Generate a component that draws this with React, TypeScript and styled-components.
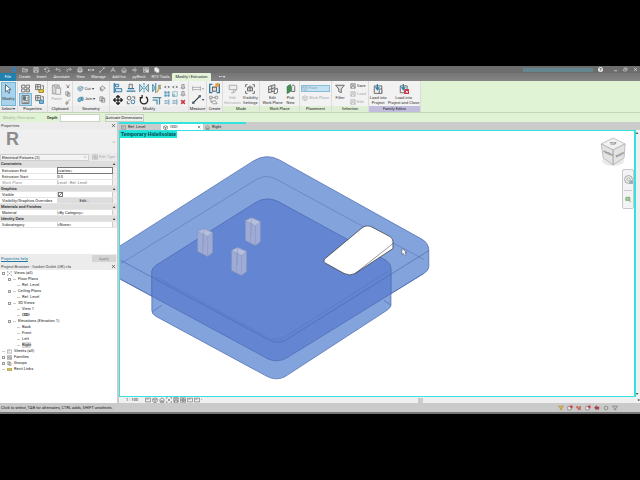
import React from "react";
import styled, { createGlobalStyle, css } from "styled-components";

const Global = createGlobalStyle`
  * { box-sizing: border-box; }
  body { margin: 0; background: #000; }
  button, input, select, table { font: inherit; color: inherit; }
  button { padding: 0; border: 0; background: none; white-space: nowrap; }
  svg { display: block; flex: none; }
`;

const cyan = "#34e2e0";

const Screen = styled.div`
  min-height: 100vh;
  padding: 66px 0;
  display: flex;
  flex-direction: column;
  background: #000;
  color: #222;
  font: 4px/6px Roboto, "Noto Sans", sans-serif;
  overflow: hidden;
`;

/* ---------- icons ---------- */
const icons: Record<string, React.ReactNode> = {
  revit: <path d="M4 14V2h5c5 0 5 6 0 6H5M9 8l4 6" stroke="#2d86c8" strokeWidth="3" />,
  open: <path d="M1 13V4h5l2 2h6v7zM3 8h12" />,
  save: <path d="M2 2h12v12H2zM5 2v4h6V2M4 14V9h8v5" />,
  sync: <path d="M13 5a6 6 0 0 0-11 2M2 3v4h4M3 11a6 6 0 0 0 11-2m0 4V9h-4" />,
  undo: <path d="M3 6h7c5 0 5 6 1 7M6 2L2 6l4 4" />,
  redo: <path d="M13 6H6c-5 0-5 6-1 7M10 2l4 4-4 4" />,
  print: <path d="M4 6V2h8v4M2 6h12v6H2zM4 10h8v4H4z" />,
  rule: <path d="M1 10V5m14 5V5M1 8h14M4 5L1 8l3 3m8-6l3 3-3 3" />,
  line: <path d="M2 14L14 2M2 11v3h3M11 2h3v3" />,
  text: <path d="M2 14L8 2l6 12M5 9h6" />,
  house: <path d="M1 8l7-6 7 6M3 7v7h10V7M6 14v-4h4v4" />,
  section: <path d="M8 1v14M2 8h12M4 5l-3 3 3 3" />,
  cursor: <path d="M4 1v12l3-3 2 5 2-1-2-5h4z" fill="#fff" stroke="#4f7080" />,
  type: <><path d="M1 2h6v5H1zM9 2h6v5H9zM1 9h6v5H1z" /><path d="M9 9h6v5H9z" fill="#d9d9d9" /></>,
  types: <><path d="M1 1h9v9H1zM1 5h9M5 1v9M12 3h3v6" /><path d="M7 10h8v5H7z" fill="#f0cf3f" stroke="#8f7a20" /></>,
  palette: <><path d="M2 1h12v14H2z" fill="#fff" /><path d="M4 3h4v5H4z" fill="#367da8" /><path d="M10 4h3M10 7h3M4 10h9M4 13h9" /></>,
  families: <><path d="M1 1h9v9H1zM1 5h9M5 1v9M12 3h3v5" /><path d="M8 9h7v6H8z" fill="#77b7d5" stroke="#367da8" /></>,
  paste: <><path d="M2 2h10v12H2z" fill="#d5d5d5" /><path d="M5 1h4v3H5zM7 6h7v9H7z" fill="#eee" /></>,
  cut: <path d="M3 2l8 9M12 2L5 11" strokeWidth="2" />,
  copy: <path d="M2 2h7v9H2zM6 5h7v9H6z" fill="#f4f4f4" />,
  brush: <path d="M13 1L7 8M4 7l5 4-5 4-2-4z" fill="#cdbf8c" />,
  cope: <path d="M2 6l5-3 7 2-1 6-6 3-5-3zM7 8l7-3M7 8v6M2 6l5 2" fill="#c8dfe9" stroke="#6e94a5" />,
  join: <path d="M2 8c0-4 6-6 8-5v7c-3 4-8 4-8 0zM10 3h4v7h-4" fill="#75b5cf" stroke="#397c98" />,
  paint: <path d="M3 6l5-4 6 5-6 6zM3 6v6l5 2" fill="#e5e5e5" />,
  align: <><path d="M2 0v16" stroke="#347aa5" strokeWidth="2" /><path d="M4 2h5v4H4zM4 9h10v5H4z" fill="#d9ebf2" stroke="#347aa5" /></>,
  offset: <><path d="M1 13h14M3 9h10" stroke="#347aa5" strokeWidth="2" /><path d="M5 8V2h5v6" /></>,
  mirror: <><path d="M8 0v16" stroke="#347aa5" strokeDasharray="3 1" /><path d="M1 2v12l5-6zM15 2v12l-5-6z" fill="#bddde9" stroke="#538ea8" /></>,
  mirrorDraw: <><path d="M6 0v16" stroke="#347aa5" /><path d="M1 2v12l4-6zM11 9V3l3 6z" fill="#bddde9" stroke="#538ea8" /><path d="M8 15l6-12" stroke="#d3a531" strokeWidth="2" /></>,
  move: <path d="M8 1v14M1 8h14M5 4l3-3 3 3M5 12l3 3 3-3M4 5L1 8l3 3M12 5l3 3-3 3" stroke="#222" strokeWidth="2" />,
  circles: <><circle cx="5" cy="5" r="3" /><circle cx="11" cy="11" r="3" stroke="#347aa5" /><path d="M10 3h4v4M2 10v4h4" /></>,
  rotate: <path d="M11 3a6 6 0 1 1-6 0M5 0v4H1" stroke="#222" strokeWidth="2" />,
  trim: <path d="M1 4h14M1 8h7v7M12 4v11" stroke="#558ca3" strokeWidth="2" />,
  split: <path d="M1 8h5m4 0h5M5 5l-3 3 3 3M11 5l3 3-3 3" strokeWidth="2" />,
  array: <path d="M2 2h4v4H2zM10 2h4v4h-4zM2 10h4v4H2zM10 10h4v4h-4z" fill="#76b5d2" stroke="#347aa5" />,
  scale: <path d="M2 2h12v12H2zM2 9h5v5H2z" stroke="#5695ad" />,
  pin: <path d="M5 1h6v7l3 3H2l3-3zM8 11v4" fill="#ddd" />,
  extend: <path d="M1 5h9M1 11h9M13 1v14" stroke="#347aa5" strokeWidth="2" />,
  remove: <path d="M3 3l10 10M13 3L3 13" stroke="#ce3248" strokeWidth="4" />,
  dim: <path d="M1 4v8m14-8v8M1 6h14M1 10h14" stroke="#aaa" />,
  measure: <><path d="M2 14L14 2" strokeWidth="2" stroke="#333" /><circle cx="2" cy="14" r="2" fill="#347aa5" /><circle cx="14" cy="2" r="2" fill="#347aa5" /></>,
  create: <><path d="M5 2H1v12h4M11 2h4v12h-4" stroke="#347aa5" strokeWidth="2" /><path d="M5 6h6v6H5z" fill="#ddd" /><path d="M10 1h4v4h-4z" fill="#eda146" stroke="#eda146" /></>,
  similar: <path d="M1 2h4v4H1zM10 2h4v4h-4zM5 4h5M3 6v5M3 11l4 3h6l-3-5z" stroke="#999" />,
  extrude: <path d="M2 2h12v7l-5 5V9H2zM9 9h5M9 14H5" stroke="#aaa" fill="#eee" />,
  visibility: <><path d="M4 1H1v4M12 1h3v4M1 11v4h3M15 11v4h-3" /><path d="M4 6l4-3 4 3v5H4zM4 6h8M8 6v5" fill="#ddd" /></>,
  plane: <><path d="M1 4l10-3v10L1 14zM1 9l10-3M6 3v10" fill="#e6e6e6" /><path d="M10 9l5-2v7l-5 2z" fill="#fff" /></>,
  pick: <><path d="M2 4l5-3v11l-5 3z" fill="#3c9b4f" stroke="#307b40" /><path d="M9 5c0-5 6-4 5 1v6H9z" fill="#eee" /></>,
  filter: <path d="M1 2h14l-5 6v6l-4-2V8z" fill="#ddd" />,
  load: <><path d="M2 3h12v12H2z" fill="#eee" /><path d="M10 8h4v7h-4z" fill="#fff" /><path d="M7 0v8M4 5l3 4 3-4" stroke="#2c83b5" strokeWidth="2" /></>,
  loadClose: <><path d="M2 3h11v11H2z" fill="#eee" /><path d="M7 0v8M4 5l3 4 3-4" stroke="#2c83b5" strokeWidth="2" /><path d="M9 9h7v7H9z" fill="#cb3545" stroke="#cb3545" /><path d="M11 11l3 3m0-3l-3 3" stroke="#fff" /></>,
  cube: <path d="M2 5l6-3 6 3v7l-6 3-6-3zM2 5l6 3 6-3M8 8v7" />,
  sheet: <path d="M1 3h14v10H1zM4 6h5" />,
  views: <path d="M4 1H1v4M12 1h3v4M1 11v4h3M15 11v4h-3M5 5l6 6m0-6l-6 6" />,
  link: <path d="M0 5h16v6H0z" fill="#d5c63e" stroke="#827b27" />,
  close: <path d="M3 3l10 10M13 3L3 13" strokeWidth="2" />,
  min: <path d="M3 12h10" strokeWidth="2" />,
  restore: <path d="M2 6h8v7H2zM5 6V3h8v7h-3" />,
  funnel: <path d="M1 3h14l-5 5v5l-4-1V8z" />,
  flagGold: <path d="M1 3h14l-5 5v5l-4-1V8z" fill="#d9b94d" stroke="#a5883a" />,
  flagRed: <><path d="M2 4h9v9H2z" fill="#eee" /><path d="M9 2h5v6H9z" fill="#cf4452" stroke="#cf4452" /></>,
  dragRed: <path d="M2 3l5 3 5-3v6l-5 5V9L2 8zM9 9l5 5" fill="#dd8a70" stroke="#b94436" />,
  arrowRed: <path d="M1 7l6-5v3h6v5H7v3zM11 10v4" fill="#b94450" stroke="#8a3b44" />,
  gear: <circle cx="8" cy="8" r="5" />,
  wheel: <><circle cx="8" cy="8" r="7" stroke="#999" /><circle cx="8" cy="8" r="3" stroke="#999" /><circle cx="13" cy="13" r="3" fill="#8dafb9" stroke="#8dafb9" /></>,
  zoom: <path d="M2 3h9v7H2zM9 10l5 4" fill="#a5c99e" stroke="#80a879" strokeWidth="2" />,
  down: <path d="M4 6l4 4 4-4" strokeWidth="2" />,
};

const Icon = ({ name, size = 7, color = "#666" }: { name: string; size?: number; color?: string }) => (
  <svg width={size} height={size} viewBox="0 0 16 16" fill="none" stroke={color} strokeWidth="1.5" aria-hidden="true">
    {icons[name]}
  </svg>
);

/* ---------- title and tabs ---------- */
const TitleBar = styled.header`
  height: 7px;
  padding: 0 2px 0 11px;
  display: flex;
  align-items: center;
  gap: 5px;
  background: #6d6d6d;
  color: #ddd;
`;
const TitleSpace = styled.span`flex: 1;`;
const Account = styled.span`
  width: 70px;
  height: 4px;
  background: #66868f;
`;
const Help = styled.button`
  width: 5px;
  height: 5px;
  border-radius: 50%;
  background: #e8e8e8;
  color: #444;
  line-height: 5px;
  font-weight: 700;
`;
const TabBar = styled.nav`
  height: 8px;
  display: flex;
  align-items: stretch;
  background: linear-gradient(#747474, #858585);
`;
const RibbonTab = styled.button<{ $w: number; $kind?: "file" | "active" }>`
  width: ${(p) => p.$w}px;
  line-height: 8px;
  color: #f2f2f2;
  ${(p) => p.$kind === "file" && css`background: #2181ae; color: #fff;`}
  ${(p) => p.$kind === "active" && css`background: #e3f2d8; color: #222; border-radius: 1px 1px 0 0;`}
`;

/* ---------- ribbon ---------- */
const Ribbon = styled.section`
  height: 31px;
  display: flex;
  background: #e1f3d5;
`;
const Panel = styled.div<{ $w: number }>`
  width: ${(p) => p.$w}px;
  display: flex;
  flex-direction: column;
  flex: none;
  background: #f2f2f2;
  border-right: 1px solid #dcdcdc;
`;
const PanelBody = styled.div<{ $gap?: number }>`
  flex: 1;
  min-height: 0;
  display: flex;
  align-items: stretch;
  justify-content: center;
  gap: ${(p) => p.$gap ?? 1}px;
  padding: 1px 0 0;
`;
const PanelLabel = styled.div<{ $tone?: "context" | "family" }>`
  height: 6px;
  text-align: center;
  white-space: nowrap;
  background: ${(p) => (p.$tone === "family" ? "#c1bedd" : p.$tone === "context" ? "#dfefd4" : "#ececec")};
`;
const BigButton = styled.button<{ $active?: boolean; $dim?: boolean }>`
  min-width: 14px;
  padding: 2px 1px 0;
  display: flex;
  flex-direction: column;
  align-items: center;
  gap: 1px;
  line-height: 5px;
  white-space: pre;
  color: ${(p) => (p.$dim ? "#aaa" : "#333")};
  ${(p) => p.$active && css`background: #a9d3ec; box-shadow: inset 0 0 0 1px #79b5d6; gap: 2px;`}
`;
const IconGrid = styled.div<{ $cols: number; $cell: number }>`
  display: grid;
  grid-template-columns: repeat(${(p) => p.$cols}, ${(p) => p.$cell}px);
  place-items: center;
  align-content: space-evenly;
`;
const IconButton = styled.button<{ $active?: boolean }>`
  padding: 1px;
  ${(p) => p.$active && css`background: #b3d8ee; box-shadow: 0 0 0 1px #79b5d6;`}
`;
const Stack = styled.div`
  display: flex;
  flex-direction: column;
  justify-content: space-evenly;
`;
const SmallButton = styled.button<{ $dim?: boolean; $active?: boolean }>`
  display: flex;
  align-items: center;
  gap: 1px;
  padding: 0 1px;
  min-height: 7px;
  color: ${(p) => (p.$dim ? "#aaa" : "#333")};
  ${(p) => p.$active && css`background: #c4e2f2; box-shadow: inset 0 0 0 1px #8abdd8; color: #8da6b4;`}
`;

/* ---------- options bar ---------- */
const OptionsBar = styled.form`
  height: 10px;
  display: flex;
  align-items: center;
  background: #e1f3d5;
  border-top: 1px solid #c5d4ba;
`;
const ModeName = styled.span`
  width: 44px;
  padding-left: 3px;
  color: #a5ad9e;
`;
const DepthLabel = styled.label`
  display: flex;
  align-items: center;
  gap: 2px;
  margin-left: 3px;
  font-weight: 500;
`;
const DepthInput = styled.input`
  width: 40px;
  height: 8px;
  padding: 0 1px;
  border: 1px solid #ccd3c7;
  background: #fff;
`;
const Activate = styled.button`
  width: 39px;
  height: 8px;
  margin-left: 5px;
  border: 1px solid #c6cec0;
  background: #eef1eb;
`;

/* ---------- side panels ---------- */
const Main = styled.main`
  flex: 1;
  min-height: 281px;
  display: flex;
  background: #cbcbcb;
`;
const Side = styled.aside`
  width: 118px;
  flex: none;
  display: flex;
  flex-direction: column;
  background: #fff;
  border-right: 1px solid #c9c9c9;
`;
const SideHead = styled.div`
  height: 7px;
  padding: 0 1px;
  display: flex;
  justify-content: space-between;
  align-items: center;
  background: #ececec;
  color: #444;
`;
const Preview = styled.div`
  height: 24px;
  padding: 2px 1px 0 6px;
  display: flex;
  align-items: flex-start;
  justify-content: space-between;
  background: #efefef;
`;
const FamilyMark = styled.span`
  color: #8c8c8c;
  font: 700 18px/17px "Liberation Sans", sans-serif;
`;
const Caret = styled.span`padding-top: 9px;`;
const TypeRow = styled.div`
  height: 8px;
  display: flex;
  align-items: center;
  gap: 2px;
  background: #eaeaea;
`;
const SelectBox = styled.div`
  width: 89px;
  height: 7px;
  padding-right: 1px;
  display: flex;
  align-items: center;
  border: 1px solid #cfcfcf;
  background: #f3f3f3;
`;
const TypeSelect = styled.select`
  appearance: none;
  flex: 1;
  height: 5px;
  padding: 0 1px;
  border: 0;
  line-height: 5px;
  background: none;
`;
const PropTable = styled.table`
  width: 100%;
  border-collapse: collapse;
  table-layout: fixed;
  tr { height: 6px; }
  td, th { padding: 0; line-height: 5px; border-bottom: 1px solid #e5e5e5; text-align: left; font-weight: 400; white-space: nowrap; }
`;
const GroupCell = styled.th`
  && { background: #dedede; font-weight: 500; padding: 0 1px; }
`;
const GroupRow = styled.span`
  display: flex;
  justify-content: space-between;
  padding-right: 1px;
`;
const NameCell = styled.th<{ $dim?: boolean }>`
  && { padding-left: 2px; border-right: 1px solid #ddd; color: ${(p) => (p.$dim ? "#999" : "#222")}; }
`;
const ValueCell = styled.td<{ $dim?: boolean }>`color: ${(p) => (p.$dim ? "#777" : "#222")};`;
const ValueInput = styled.input`
  display: block;
  width: 100%;
  height: 5px;
  padding: 0;
  border: 0;
  outline: 1px solid #777;
  line-height: 5px;
`;
const CheckBox = styled.input`
  appearance: none;
  display: block;
  width: 5px;
  height: 5px;
  margin: 0;
  border: 1px solid #777;
  background: linear-gradient(135deg, #fff 40%, #777 50%, #fff 60%);
`;
const EditButton = styled.button`
  display: block;
  width: 100%;
  height: 5px;
  line-height: 5px;
  background: #ddd;
`;
const SideCell = styled.td`&& { border-left: 1px solid #ccc; background: #eee; }`;
const SideFoot = styled.div`
  height: 9px;
  margin-top: auto;
  padding: 0 1px;
  display: flex;
  align-items: center;
  justify-content: space-between;
  background: #ececec;
`;
const HelpLink = styled.a`color: #28799e;`;
const Apply = styled.button`
  width: 24px;
  height: 7px;
  background: #d5d5d5;
  color: #888;
`;
const PropsArea = styled.section`
  height: 141px;
  display: flex;
  flex-direction: column;
`;
const Tree = styled.ul`
  list-style: none;
  margin: 0;
  padding: 0;
  flex: 1;
`;
const TreeItem = styled.li<{ $depth: number }>`
  height: 6px;
  padding-left: ${(p) => [2, 8, 17][p.$depth]}px;
  display: flex;
  align-items: center;
  gap: 2px;
  white-space: nowrap;
`;
const Toggle = styled.button`
  width: 3px;
  height: 3px;
  border: 1px solid #999;
`;
const Branch = styled.span`
  width: 3px;
  height: 1px;
  background: #ccc;
`;
const ItemName = styled.span<{ $on?: boolean }>`
  background: ${(p) => (p.$on ? "#d9d9d9" : "none")};
  line-height: 6px;
`;

/* ---------- drawing area ---------- */
const Work = styled.section`
  flex: 1;
  min-width: 0;
  display: flex;
  flex-direction: column;
  margin-left: 1px;
`;
const ProgressLine = styled.div`
  width: 127px;
  height: 2px;
  background: ${cyan};
`;
const ViewTabs = styled.div`
  height: 6px;
  display: flex;
`;
const ViewTab = styled.button<{ $active?: boolean }>`
  width: 42px;
  padding: 0 2px;
  display: flex;
  align-items: center;
  gap: 2px;
  line-height: 6px;
  background: ${(p) => (p.$active ? "#fff" : "none")};
`;
const TabName = styled.span`flex: 1; text-align: left;`;
const ViewRow = styled.div`
  flex: 1;
  min-height: 0;
  display: flex;
`;
const Viewport = styled.div`
  flex: 1;
  min-width: 0;
  position: relative;
  border: 1px solid ${cyan};
  border-width: 1px 2px 1px 1px;
  background: #fff;
`;
const Drawing = styled.svg`
  position: absolute;
  inset: 0;
  width: 100%;
  height: 100%;
`;
const Badge = styled.div`
  position: absolute;
  left: 0;
  top: 0;
  height: 7px;
  padding: 0 1px;
  background: #1ce5dc;
  color: #0c3c40;
  font: 700 5px/7px "Liberation Sans", sans-serif;
`;
const NavBar = styled.div`
  position: absolute;
  right: 0;
  top: 38px;
  width: 12px;
  height: 40px;
  padding: 5px 1px;
  display: flex;
  flex-direction: column;
  align-items: center;
  justify-content: space-between;
  border: 1px solid #c8c8c8;
  border-radius: 2px;
  background: #f3f3f3;
`;
const NavRule = styled.span`
  width: 8px;
  height: 1px;
  background: #ccc;
`;
const ScrollV = styled.div`
  width: 4px;
  display: flex;
  flex-direction: column;
  justify-content: space-between;
  background: #f0f0f0;
`;
const ViewBar = styled.div`
  height: 6px;
  padding-left: 7px;
  display: flex;
  align-items: center;
  gap: 1px;
  background: #f0f0f0;
`;
const Scale = styled.span`width: 18px;`;
const ScrollH = styled.div`
  flex: 1;
  display: flex;
  justify-content: center;
`;
const Thumb = styled.span`
  width: 5px;
  height: 5px;
  background: #cbcbcb;
`;
const Status = styled.footer`
  height: 11px;
  padding: 0 22px 0 1px;
  display: flex;
  align-items: center;
  gap: 3px;
  background: #cacaca;
  border-bottom: 2px solid #777;
`;
const Message = styled.span`flex: 1;`;

const Prism = ({ x, y }: { x: number; y: number }) => (
  <g transform={`translate(${x} ${y})`} stroke="#8a93b8" strokeWidth=".5">
    <path d="M0 3L6 0l9 4v20l-5 4-10-5z" fill="#9dabd6" />
    <path d="M0 3L6 0l9 4-5 4z" fill="#b4bedd" />
    <path d="M10 8v20M5 5v20M6 0v18" fill="none" />
  </g>
);

const block =
  "M151 271Q151 268 155 265L255 202Q266 195 278 201L386 260Q391 263 391 268V305Q391 307 387 310L284 377Q275 381 266 376L155 316Q151 314 151 310z";

const Model = () => (
  <Drawing viewBox="120 130 514 266" role="img" aria-label="3D view of socket outlet">
    <defs>
      <clipPath id="slabClip">
        <path d="M120 245L253 160Q266 152 279 159L421 238Q429 242 429 250V266Q429 270 424 273L286 358Q277 363 268 359L120 279z" />
      </clipPath>
    </defs>
    <g stroke="#4865ad" strokeWidth=".7">
      <path d="M118 246L253 160Q266 152 279 159L421 238Q429 242 429 250V266Q429 270 424 273L286 358Q277 363 268 359L118 278z" fill="#83a3dc" />
      <path d={block} fill="#83a3dc" />
      <path clipPath="url(#slabClip)" d={block} fill="#6485d1" strokeWidth=".4" />
      <g fill="none" strokeWidth=".6">
        <path d="M120 260L269 340Q277 344 285 340L429 250" />
        <path d="M120 263L257 178Q267 173 277 179L424 259" strokeOpacity=".7" />
        <path d="M154 276L269 338Q276 341 284 337L388 271" strokeOpacity=".5" />
        <path d="M120 279L268 359Q277 363 286 358L424 273M152 311l9-6M391 305l-7-5" />
      </g>
    </g>
    <Prism x={197} y={228} />
    <Prism x={245} y={217} />
    <Prism x={231} y={247} />
    <path d="M325 258L361 228Q367 223 373 227L390 236Q393 238 393 241V248L355 273Q350 276 344 273L326 263Q322 261 325 258z" fill="#fff" stroke="#333" strokeWidth=".7" />
    <path d="M393 243L355 273" stroke="#333" strokeWidth=".5" />
    <path d="M402 248v6l1.500-1 1.500 2 1-1-1-2h2z" fill="#fff" stroke="#444" strokeWidth=".5" />
    <ellipse cx="614" cy="160" rx="11" ry="5" fill="#e9e9e9" />
    <g fill="#f1f1f1" stroke="#aaa" strokeWidth=".7">
      <path d="M614 137l12 6-12 6-12-6z" />
      <path d="M602 143l12 6v15l-10-7zM626 143l-12 6v15l11-7z" fill="#e3e3e3" />
    </g>
    <g fill="#666" fontFamily="Liberation Sans" fontSize="3" fontWeight="700">
      <text x="611" y="144">TOP</text>
      <text x="604" y="153" transform="rotate(25 608 152)">FRONT</text>
      <text x="616" y="155" transform="rotate(-25 620 153)">RIGHT</text>
    </g>
  </Drawing>
);

const Properties = () => {
  const group = (name: string) => (
    <tr><GroupCell colSpan={3} scope="colgroup"><GroupRow><span>{name}</span><span>▴</span></GroupRow></GroupCell></tr>
  );
  const row = (name: string, value: React.ReactNode, dim = false) => (
    <tr><NameCell scope="row" $dim={dim}>{name}</NameCell><ValueCell $dim={dim}>{value}</ValueCell><SideCell /></tr>
  );
  return (
    <PropsArea>
      <SideHead><span>Properties</span><button aria-label="Close properties"><Icon name="close" size={5} color="#333" /></button></SideHead>
      <Preview><FamilyMark>R</FamilyMark><Caret><Icon name="down" size={4} /></Caret></Preview>
      <TypeRow>
        <SelectBox>
          <TypeSelect aria-label="Category"><option>Electrical Fixtures (2)</option></TypeSelect>
          <Icon name="down" size={4} />
        </SelectBox>
        <SmallButton $dim><Icon name="type" size={6} color="#aaa" />Edit Type</SmallButton>
      </TypeRow>
      <PropTable>
        <colgroup><col width="57" /><col /><col width="5" /></colgroup>
        <tbody>
          {group("Constraints")}
          {row("Extrusion End", <ValueInput aria-label="Extrusion End" defaultValue="<varies>" />)}
          {row("Extrusion Start", "0.0")}
          {row("Work Plane", "Level : Ref. Level", true)}
          {group("Graphics")}
          {row("Visible", <CheckBox type="checkbox" aria-label="Visible" defaultChecked />)}
          {row("Visibility/Graphics Overrides", <EditButton>Edit...</EditButton>)}
          {group("Materials and Finishes")}
          {row("Material", "<By Category>")}
          {group("Identity Data")}
          {row("Subcategory", "<None>")}
        </tbody>
      </PropTable>
      <SideFoot><HelpLink href="#help">Properties help</HelpLink><Apply>Apply</Apply></SideFoot>
    </PropsArea>
  );
};

const tree: { d: number; n: string; t?: boolean; i?: string; on?: boolean; b?: boolean }[] = [
  { d: 0, n: "Views (all)", t: true, i: "views" },
  { d: 1, n: "Floor Plans", t: true }, { d: 2, n: "Ref. Level" },
  { d: 1, n: "Ceiling Plans", t: true }, { d: 2, n: "Ref. Level" },
  { d: 1, n: "3D Views", t: true }, { d: 2, n: "View 1" }, { d: 2, n: "{3D}", b: true },
  { d: 1, n: "Elevations (Elevation 1)", t: true },
  { d: 2, n: "Back" }, { d: 2, n: "Front" }, { d: 2, n: "Left" }, { d: 2, n: "Right", on: true },
  { d: 0, n: "Sheets (all)", i: "sheet" },
  { d: 0, n: "Families", t: true, i: "type" },
  { d: 0, n: "Groups", t: true, i: "copy" },
  { d: 0, n: "Revit Links", i: "link" },
];

const tabs: [string, number, ("file" | "active")?][] = [
  ["File", 16, "file"], ["Create", 17], ["Insert", 17], ["Annotate", 23], ["View", 15], ["Manage", 21],
  ["Add-Ins", 20], ["pyRevit", 20], ["RTV Tools", 23], ["Modify | Extrusion", 39, "active"], ["▪▪ ▾", 22],
];

const App = () => (
  <Screen>
    <Global />
    <TitleBar>
      {["revit", "open", "save", "sync", "undo", "redo", "print", "rule", "line", "text", "house", "section", "type", "copy"].map((n) => (
        <button key={n} aria-label={n}><Icon name={n} size={6} color="#e6e6e6" /></button>
      ))}
      <TitleSpace />
      <Account />
      <Help>?</Help>
      <span />
      <button aria-label="Minimize"><Icon name="min" size={5} color="#eee" /></button>
      <button aria-label="Restore"><Icon name="restore" size={5} color="#eee" /></button>
      <button aria-label="Close"><Icon name="close" size={5} color="#eee" /></button>
    </TitleBar>
    <TabBar>
      {tabs.map(([n, w, k]) => <RibbonTab key={n} $w={w} $kind={k}>{n}</RibbonTab>)}
    </TabBar>

    <Ribbon>
      <Panel $w={18}>
        <PanelBody><BigButton $active><Icon name="cursor" size={10} />Modify</BigButton></PanelBody>
        <PanelLabel>Select ▾</PanelLabel>
      </Panel>
      <Panel $w={30}>
        <PanelBody>
          <IconGrid $cols={2} $cell={14}>
            {["type", "types", "palette", "families"].map((n) => (
              <IconButton key={n} aria-label={n} $active={n === "palette"}><Icon name={n} size={9} /></IconButton>
            ))}
          </IconGrid>
        </PanelBody>
        <PanelLabel>Properties</PanelLabel>
      </Panel>
      <Panel $w={25}>
        <PanelBody>
          <BigButton $dim><Icon name="paste" size={11} color="#aaa" />Paste</BigButton>
          <Stack>{["cut", "copy", "brush"].map((n) => <button key={n} aria-label={n}><Icon name={n} size={6} /></button>)}</Stack>
        </PanelBody>
        <PanelLabel>Clipboard</PanelLabel>
      </Panel>
      <Panel $w={37}>
        <PanelBody $gap={3}>
          <Stack>
            <SmallButton><Icon name="cope" />Cut ▾</SmallButton>
            <SmallButton><Icon name="join" />Join ▾</SmallButton>
          </Stack>
          <Stack>
            <button aria-label="Paint"><Icon name="paint" /></button>
            <button aria-label="Split face"><Icon name="copy" /></button>
          </Stack>
        </PanelBody>
        <PanelLabel>Geometry</PanelLabel>
      </Panel>
      <Panel $w={79}>
        <PanelBody $gap={0}>
          <IconGrid $cols={4} $cell={13}>
            {["align", "offset", "mirror", "mirrorDraw", "move", "circles", "rotate", "trim"].map((n) => (
              <button key={n} aria-label={n}><Icon name={n} size={10} /></button>
            ))}
          </IconGrid>
          <IconGrid $cols={3} $cell={8}>
            {["split", "split", "pin", "array", "scale", "pin", "extend", "extend", "remove"].map((n, i) => (
              <button key={i} aria-label={n}><Icon name={n} size={6} /></button>
            ))}
          </IconGrid>
        </PanelBody>
        <PanelLabel>Modify</PanelLabel>
      </Panel>
      <Panel $w={18}>
        <PanelBody>
          <Stack>
            <SmallButton aria-label="Dimension" $dim><Icon name="dim" size={9} />▾</SmallButton>
            <SmallButton aria-label="Measure"><Icon name="measure" size={9} />▾</SmallButton>
          </Stack>
        </PanelBody>
        <PanelLabel>Measure</PanelLabel>
      </Panel>
      <Panel $w={16}>
        <PanelBody>
          <Stack>
            <button aria-label="Create group"><Icon name="create" size={11} /></button>
            <button aria-label="Create similar"><Icon name="similar" size={10} /></button>
          </Stack>
        </PanelBody>
        <PanelLabel>Create</PanelLabel>
      </Panel>
      <Panel $w={37}>
        <PanelBody $gap={0}>
          <BigButton $dim><Icon name="extrude" size={10} />{"Edit\nExtrusion"}</BigButton>
          <BigButton><Icon name="visibility" size={10} />{"Visibility\nSettings"}</BigButton>
        </PanelBody>
        <PanelLabel $tone="context">Mode</PanelLabel>
      </Panel>
      <Panel $w={40}>
        <PanelBody $gap={0}>
          <BigButton><Icon name="plane" size={10} />{"Edit\nWork Plane"}</BigButton>
          <BigButton><Icon name="pick" size={10} />{"Pick\nNew"}</BigButton>
        </PanelBody>
        <PanelLabel $tone="context">Work Plane</PanelLabel>
      </Panel>
      <Panel $w={32}>
        <PanelBody>
          <Stack>
            <SmallButton $active><Icon name="cube" size={6} color="#88a8b8" />Face</SmallButton>
            <SmallButton $dim><Icon name="cube" size={6} color="#aaa" />Work Plane</SmallButton>
            <span />
          </Stack>
        </PanelBody>
        <PanelLabel $tone="context">Placement</PanelLabel>
      </Panel>
      <Panel $w={37}>
        <PanelBody $gap={2}>
          <BigButton><Icon name="filter" size={10} />Filter</BigButton>
          <Stack>
            <SmallButton><Icon name="save" size={6} />Save</SmallButton>
            <SmallButton $dim><Icon name="save" size={6} color="#aaa" />Load</SmallButton>
            <SmallButton $dim><Icon name="save" size={6} color="#aaa" />Edit</SmallButton>
          </Stack>
        </PanelBody>
        <PanelLabel $tone="context">Selection</PanelLabel>
      </Panel>
      <Panel $w={52}>
        <PanelBody $gap={0}>
          <BigButton><Icon name="load" size={10} />{"Load into\nProject"}</BigButton>
          <BigButton><Icon name="loadClose" size={10} />{"Load into\nProject and Close"}</BigButton>
        </PanelBody>
        <PanelLabel $tone="family">Family Editor</PanelLabel>
      </Panel>
    </Ribbon>

    <OptionsBar>
      <ModeName>Modify | Extrusion</ModeName>
      <DepthLabel>Depth<DepthInput type="text" /></DepthLabel>
      <Activate type="button">Activate Dimensions</Activate>
    </OptionsBar>

    <Main>
      <Side>
        <Properties />
        <SideHead><span>Project Browser - Socket Outlet (UK).rfa</span><button aria-label="Close browser"><Icon name="close" size={5} color="#333" /></button></SideHead>
        <Tree>
          {tree.map((r, i) => (
            <TreeItem key={i} $depth={r.d}>
              {r.t ? <Toggle aria-label={`Toggle ${r.n}`} /> : <Branch />}
              {r.d === 1 ? <Branch /> : null}
              {r.i ? <Icon name={r.i} size={5} /> : null}
              <ItemName $on={r.on}>{r.b ? <b>{r.n}</b> : r.n}</ItemName>
            </TreeItem>
          ))}
        </Tree>
      </Side>
      <Work>
        <ProgressLine />
        <ViewTabs>
          <ViewTab><Icon name="sheet" size={5} /><TabName>Ref. Level</TabName></ViewTab>
          <ViewTab $active><Icon name="cube" size={5} color="#333" /><TabName>{"{3D}"}</TabName><Icon name="close" size={4} color="#333" /></ViewTab>
          <ViewTab><Icon name="house" size={5} /><TabName>Right</TabName></ViewTab>
        </ViewTabs>
        <ViewRow>
          <Viewport>
            <Model />
            <Badge>Temporary Hide/Isolate</Badge>
            <NavBar>
              <button aria-label="Steering wheel"><Icon name="wheel" size={9} /></button>
              <NavRule />
              <button aria-label="Zoom"><Icon name="zoom" size={7} /></button>
            </NavBar>
          </Viewport>
          <ScrollV><span>▴</span><span>▾</span></ScrollV>
        </ViewRow>
        <ViewBar>
          <Scale>1 : 100</Scale>
          {["sheet", "cube", "house", "views", "save", "type", "sheet", "sheet"].map((n, i) => (
            <button key={i} aria-label={n}><Icon name={n} size={6} color="#555" /></button>
          ))}
          <span>‹</span>
          <ScrollH><Thumb /></ScrollH>
          <span>▸</span>
        </ViewBar>
      </Work>
    </Main>
    <Status>
      <Message>Click to select, TAB for alternates, CTRL adds, SHIFT unselects.</Message>
      {["flagGold", "flagRed", "dragRed", "flagRed", "arrowRed", "gear", "funnel"].map((n, i) => (
        <button key={i} aria-label={n}><Icon name={n} size={6} /></button>
      ))}
    </Status>
  </Screen>
);

export default App;
